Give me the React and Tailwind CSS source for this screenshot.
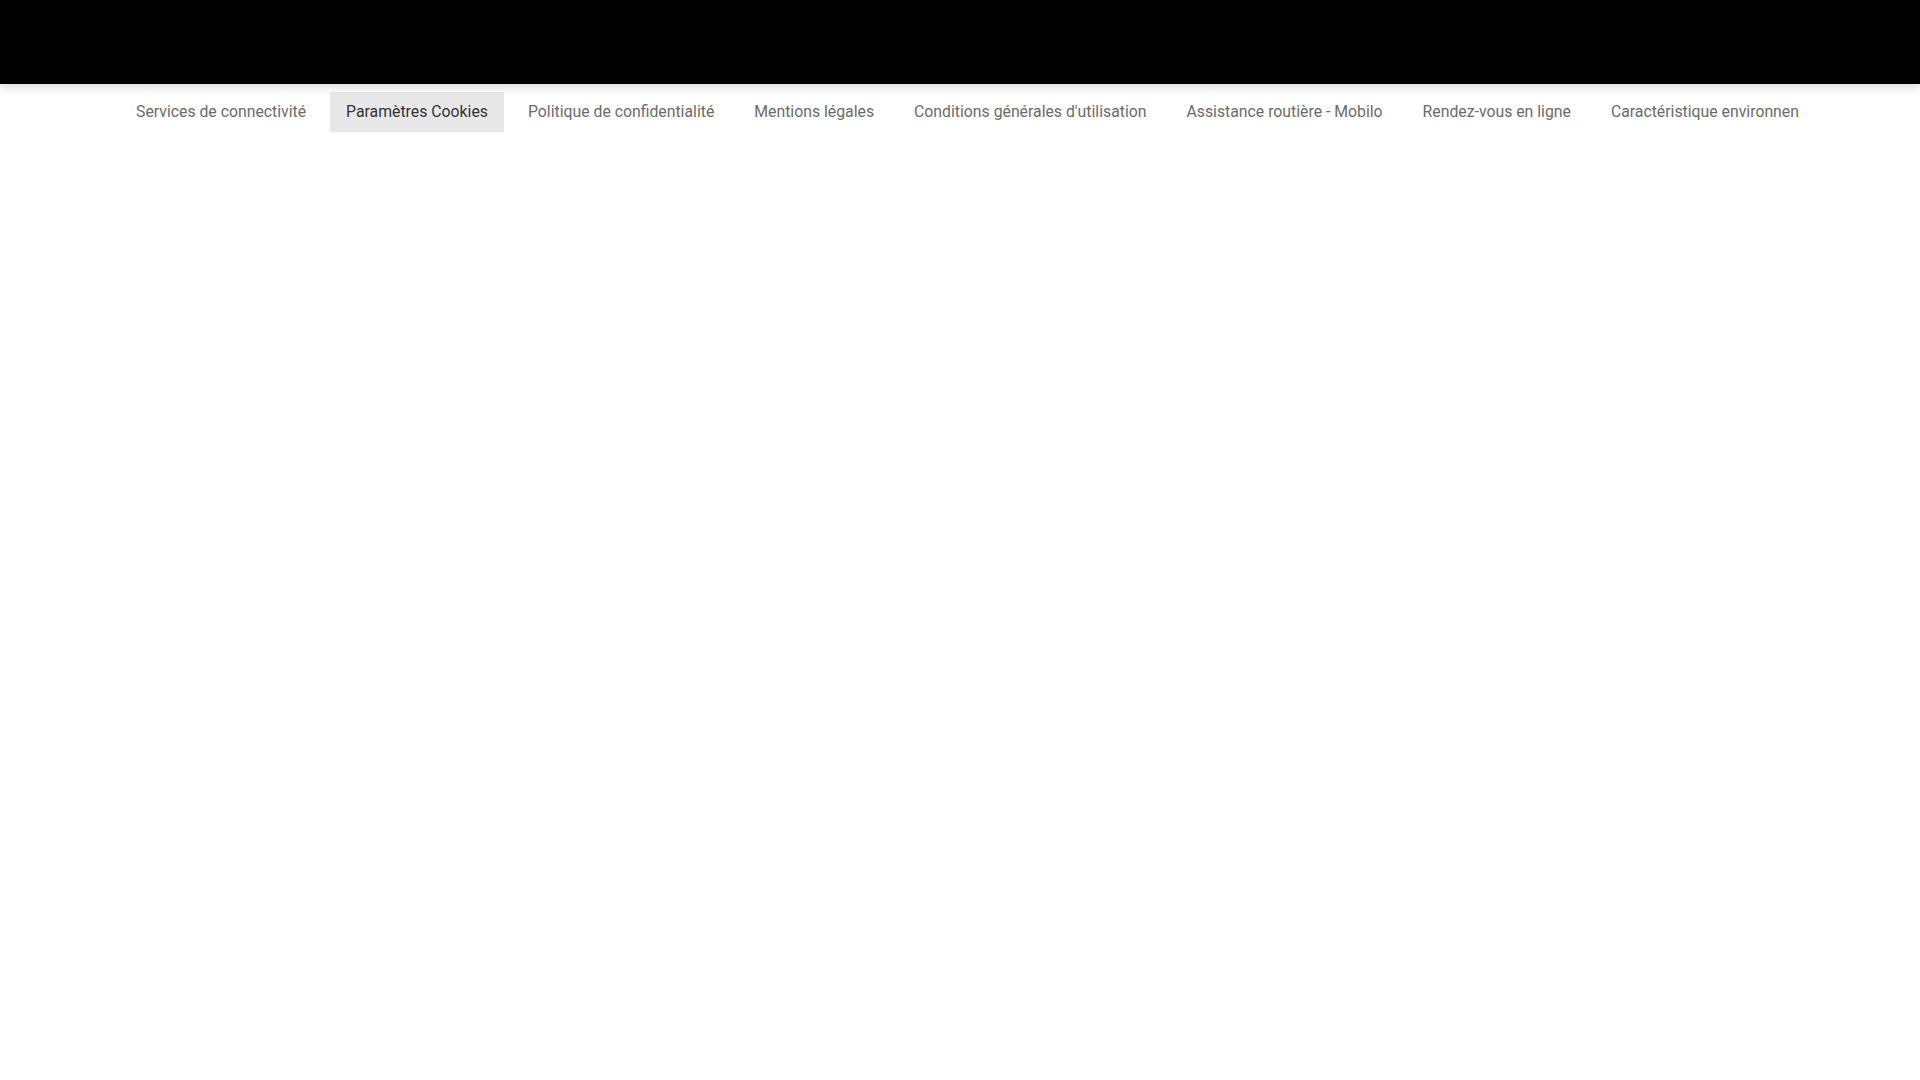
const links = [
    'Services de connectivité',
    'Paramètres Cookies',
    'Politique de confidentialité',
    'Mentions légales',
    "Conditions générales d'utilisation",
    'Assistance routière - Mobilo',
    'Rendez-vous en ligne',
    'Caractéristique environnen',
];

export default function App() {
    const active = 1;

    return (
        <div className="min-h-screen bg-white" style={{ fontFamily: 'Roboto, "Noto Sans", sans-serif' }}>
            <header className="h-[84px] bg-black shadow-[0_2px_10px_rgba(0,0,0,0.18)] relative z-10"></header>

            {/* horizontal tab strip */}
            <nav className="mx-auto w-[1680px] overflow-hidden pt-2">
                <ul className="flex gap-2 whitespace-nowrap">
                    {links.map((label, i) => (
                        <li key={label} className="shrink-0">
                            <a
                                href="#"
                                className={`block h-10 px-4 leading-10 text-[15.8px] ${i === active ? 'bg-[#e8e8e8] text-[#333]' : 'text-[#6b6b6b] hover:bg-[#f0f0f0]'}`}
                            >
                                {label}
                            </a>
                        </li>
                    ))}
                </ul>
            </nav>
        </div>
    );
}
